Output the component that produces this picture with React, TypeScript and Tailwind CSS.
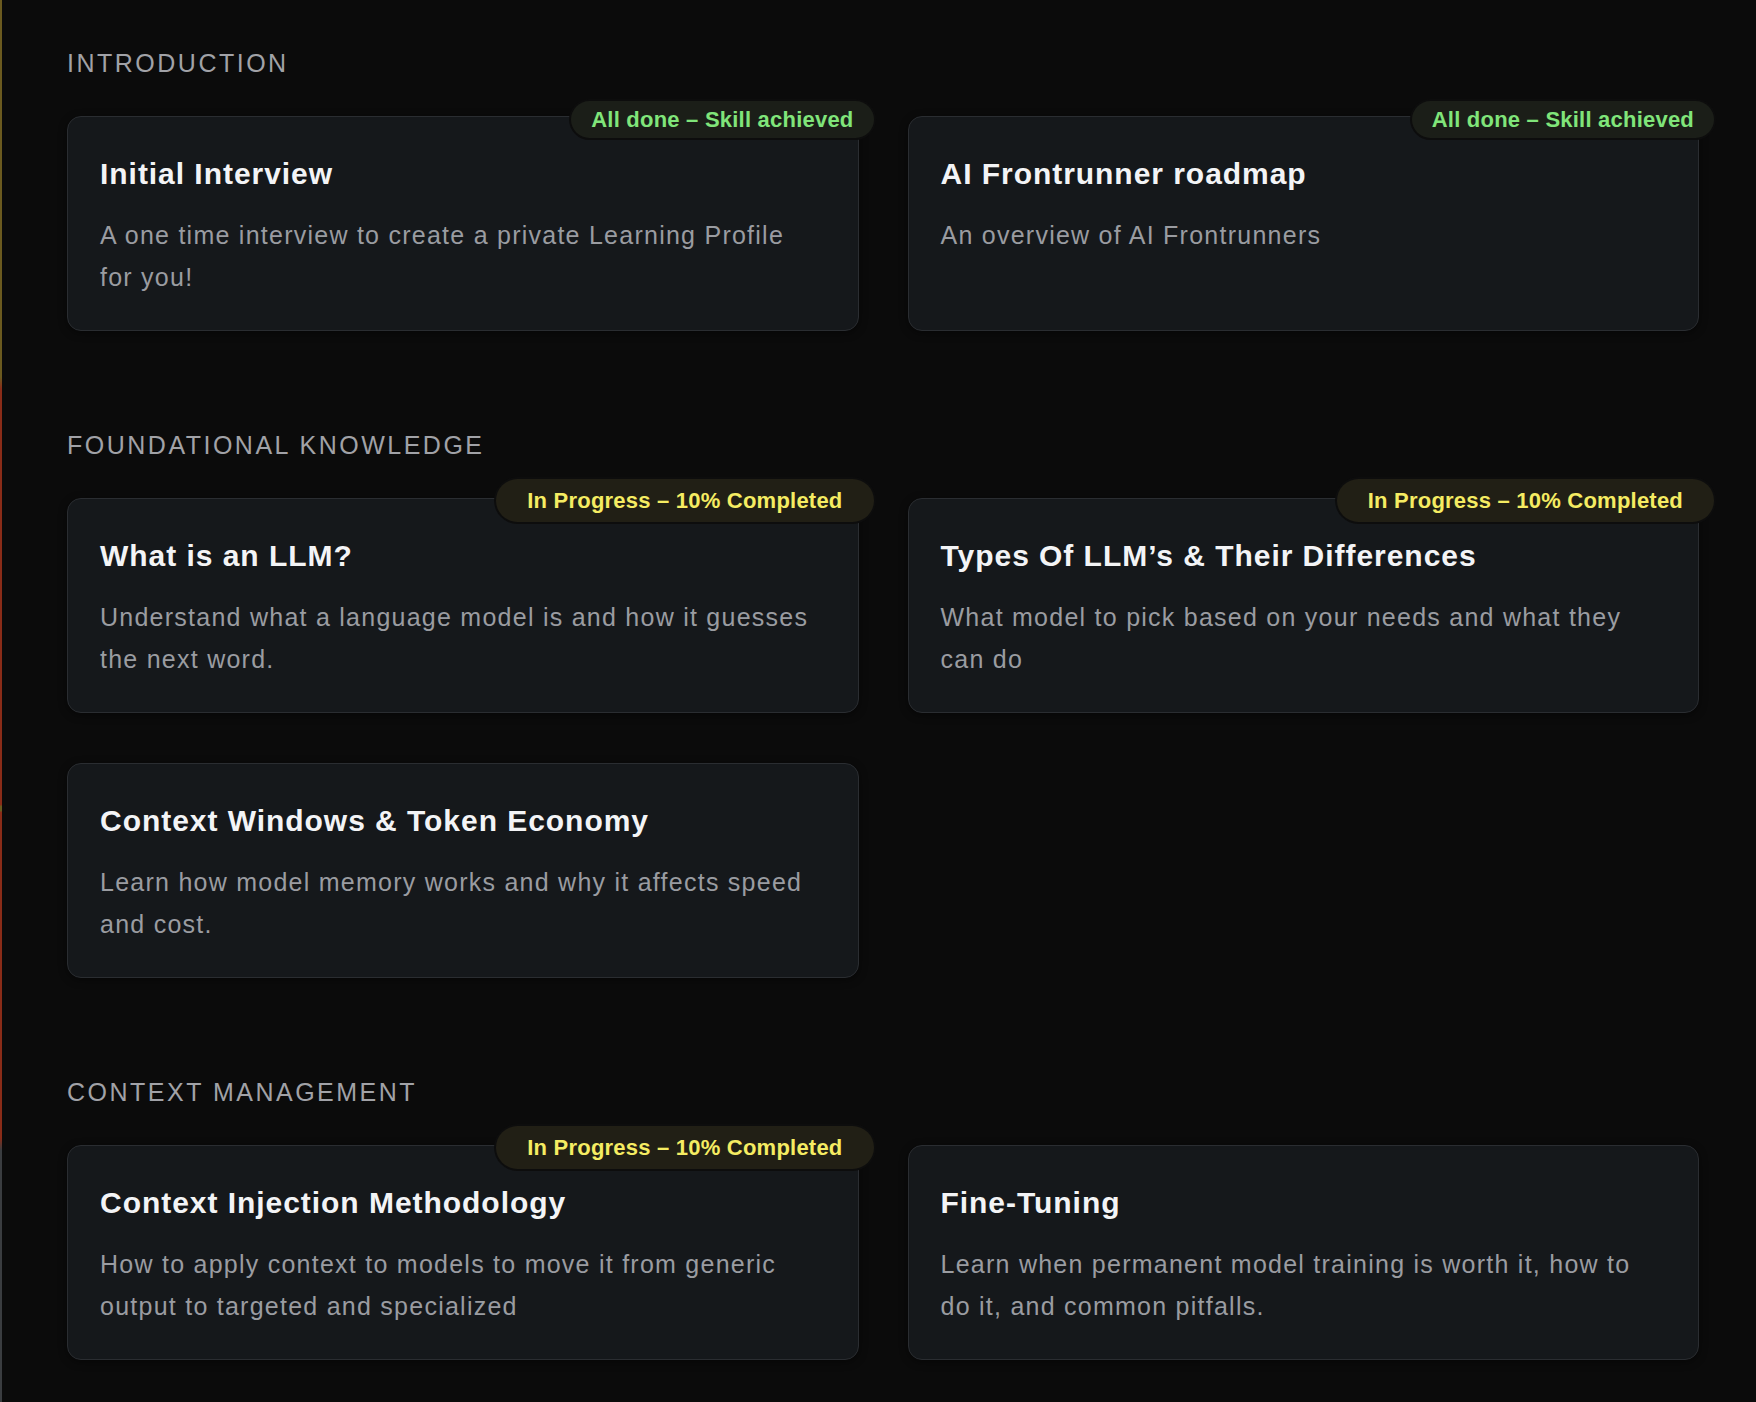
import React from "react";

type Badge = { kind: "done" | "progress" } | null;

type Item = { title: string; lines: string[]; badge: Badge };

const sections: { heading: string; items: Item[] }[] = [
  {
    heading: "INTRODUCTION",
    items: [
      {
        title: "Initial Interview",
        lines: ["A one time interview to create a private Learning Profile", "for you!"],
        badge: { kind: "done" },
      },
      {
        title: "AI Frontrunner roadmap",
        lines: ["An overview of AI Frontrunners"],
        badge: { kind: "done" },
      },
    ],
  },
  {
    heading: "FOUNDATIONAL KNOWLEDGE",
    items: [
      {
        title: "What is an LLM?",
        lines: ["Understand what a language model is and how it guesses", "the next word."],
        badge: { kind: "progress" },
      },
      {
        title: "Types Of LLM\u2019s & Their Differences",
        lines: ["What model to pick based on your needs and what they", "can do"],
        badge: { kind: "progress" },
      },
      {
        title: "Context Windows & Token Economy",
        lines: ["Learn how model memory works and why it affects speed", "and cost."],
        badge: null,
      },
    ],
  },
  {
    heading: "CONTEXT MANAGEMENT",
    items: [
      {
        title: "Context Injection Methodology",
        lines: ["How to apply context to models to move it from generic", "output to targeted and specialized"],
        badge: { kind: "progress" },
      },
      {
        title: "Fine-Tuning",
        lines: ["Learn when permanent model training is worth it, how to", "do it, and common pitfalls."],
        badge: null,
      },
    ],
  },
];

function StatusBadge({ badge }: { badge: Badge }) {
  if (!badge) return null;
  if (badge.kind === "done") {
    return (
      <div className="absolute -top-[16px] -right-[16px] flex h-[37px] items-center whitespace-nowrap rounded-full bg-[#1b1e18] px-[20px] text-[22px] font-bold tracking-[0.01em] text-[#80e57a] shadow-[0_0_0_2px_#0d0d0d]">
        All done – Skill achieved
      </div>
    );
  }
  return (
    <div className="absolute -top-[20px] -right-[16px] flex h-[43px] items-center whitespace-nowrap rounded-full bg-[#211f15] px-[31px] text-[22px] font-bold tracking-[0.01em] text-[#f5ec62] shadow-[0_0_0_2px_#0d0d0d]">
      In Progress – 10% Completed
    </div>
  );
}

function Card({ item }: { item: Item }) {
  return (
    <div className="relative rounded-[14px] border border-[#2a2d31] bg-[#15181b] px-8 pb-8 pt-[39px] shadow-[0_2px_8px_rgba(0,0,0,0.45)]">
      <StatusBadge badge={item.badge} />
      <h3 className="mb-[22px] whitespace-nowrap text-[30px] font-bold leading-[36px] tracking-[0.032em] text-[#f3f4f6]">
        {item.title}
      </h3>
      <p className="text-[25px] leading-[42px] tracking-[0.05em] text-[#9a9ca1]">
        {item.lines.map((l, i) => (
          <span key={i} className="block whitespace-nowrap">
            {l}
          </span>
        ))}
      </p>
    </div>
  );
}

export default function App() {
  return (
    <div
      className="flex min-h-[1402px] w-full bg-[#0b0b0b]"
      style={{ fontFamily: '"Liberation Sans", Arial, sans-serif' }}
    >
      <div className="w-[2px] shrink-0 self-stretch bg-[linear-gradient(to_bottom,#6b5a1f_0px,#6b5a1f_377px,#8a2c18_389px,#8a2c18_805px,#6b5a1f_806px,#6b5a1f_811px,#8a2c18_812px,#8a2c18_1138px,#3a3d40_1150px,#3a3d40_100%)]" />
      <div className="flex flex-1 flex-col gap-[99px] pl-[65px] pr-[57px] pt-[48px] pb-[40px]">
        {sections.map((s) => (
          <section key={s.heading}>
            <h2 className="mb-[38px] h-[30px] text-[25px] leading-[30px] tracking-[0.1em] text-[#a1a2a7]">
              {s.heading}
            </h2>
            <div className="grid grid-cols-2 gap-x-[49px] gap-y-[50px]">
              {s.items.map((it) => (
                <Card key={it.title} item={it} />
              ))}
            </div>
          </section>
        ))}
      </div>
    </div>
  );
}
